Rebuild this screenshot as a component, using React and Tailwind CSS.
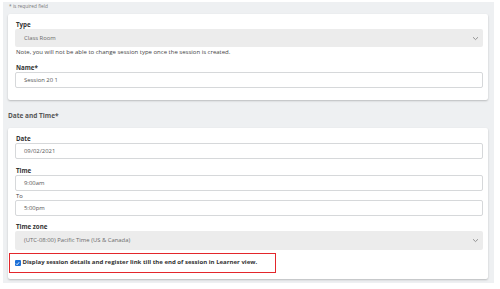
import React from "react";

const font = { fontFamily: '"Open Sans", "Noto Sans", sans-serif' };

function Chevron() {
  return (
    <svg width="7" height="5" viewBox="0 0 7 5" className="shrink-0">
      <path d="M1 1.2 L3.5 3.6 L6 1.2" fill="none" stroke="#8a8a8a" strokeWidth="0.9" />
    </svg>
  );
}

function Label({ children, className = "" }) {
  return (
    <div className={`h-[8px] leading-[8px] pl-[1px] text-[6.2px] font-bold text-[#333] ${className}`}>{children}</div>
  );
}

function Input({ value, className = "" }) {
  return (
    <div className={`h-[16px] bg-white border border-[#d6d8da] rounded-[2px] flex items-center pl-[8px] text-[5.9px] text-[#555] ${className}`}>
      {value}
    </div>
  );
}

function Select({ value, className = "" }) {
  return (
    <div className={`bg-[#ececec] rounded-[2px] flex items-center justify-between pl-[9px] pr-[4px] text-[5.9px] text-[#6b6b6b] ${className}`}>
      <span>{value}</span>
      <Chevron />
    </div>
  );
}

export default function App() {
  return (
    <div className="w-[500px] h-[289px] bg-white overflow-hidden" style={font}>
      <div className="ml-[3px] mt-[2px] w-[491px] h-[281px] bg-[#eef0f2] pl-[5px] pt-[1px]">
        <div className="h-[7px] leading-[7px] text-[4.8px] text-[#777] pl-[1px]">* is required field</div>
        <div className="mt-[4px] w-[480px] h-[86px] bg-white rounded-[2px] shadow-[0_1px_2px_rgba(0,0,0,0.22)] pl-[7px] pr-[5px] pt-[7px]">
          <Label>Type</Label>
          <Select value="Class Room" className="h-[18px]" />
          <div className="h-[10px] leading-[10px] pl-[1px] text-[6px] text-[#444]">
            Note, you will not be able to change session type once the session is created.
          </div>
          <Label className="mt-[7px]">Name*</Label>
          <Input value="Session 20 1" />
        </div>
        <div className="mt-[11px] h-[10px] leading-[10px] text-[6.5px] font-bold text-[#555]">Date and Time*</div>
        <div className="mt-[7px] w-[480px] h-[151px] bg-white rounded-[2px] shadow-[0_1px_2px_rgba(0,0,0,0.22)] pl-[7px] pr-[5px] pt-[7px]">
          <Label>Date</Label>
          <Input value="09/02/2021" />
          <Label className="mt-[8px]">Time</Label>
          <Input value="9:00am" />
          <div className="mt-[1px] h-[8px] leading-[8px] pl-[1px] text-[5.8px] text-[#444]">To</div>
          <Input value="5:00pm" />
          <Label className="mt-[7px]">Time zone</Label>
          <Select value="(UTC-08:00) Pacific Time (US & Canada)" className="h-[19px]" />
          <div className="-ml-[6px] mt-[3px] w-[267px] h-[20px] border-[1.5px] border-[#e3262b] flex items-center pl-[4.5px] gap-[2px]">
            <span className="w-[6px] h-[6px] rounded-[1px] bg-[#1a6fd8] flex items-center justify-center shrink-0">
              <svg width="5" height="5" viewBox="0 0 5 5">
                <path d="M1 2.6 L2.1 3.7 L4.1 1.3" fill="none" stroke="white" strokeWidth="0.9" />
              </svg>
            </span>
            <span className="text-[6.05px] font-bold text-[#333] whitespace-nowrap">
              Display session details and register link till the end of session in Learner view.
            </span>
          </div>
        </div>
      </div>
    </div>
  );
}
